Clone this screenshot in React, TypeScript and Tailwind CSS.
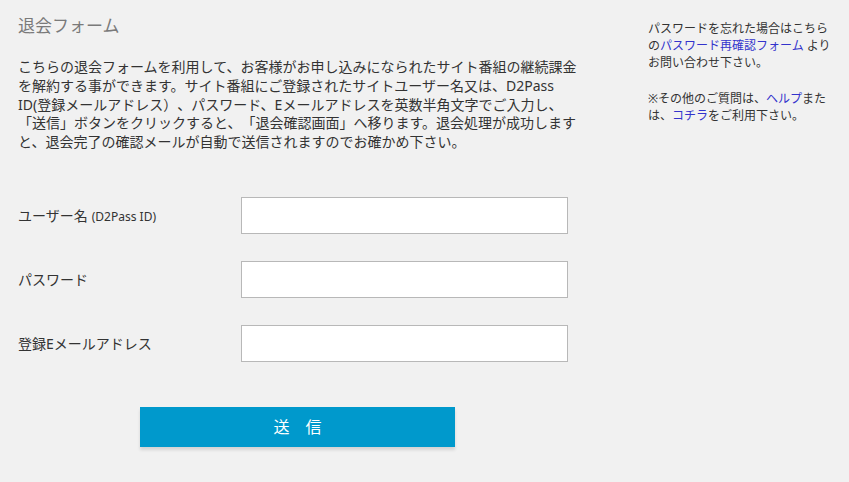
import React from 'react';

const font = "font-['Noto_Sans','Noto_Sans_CJK_JP',sans-serif]";

function FormRow({ label, sub }: { label: string; sub?: string }) {
  return (
    <div className="flex items-center h-[37px]">
      <div className="w-[223px] text-[14px] text-[#333]">
        {label}
        {sub && <span className="text-[12px] ml-1">{sub}</span>}
      </div>
      <input
        type="text"
        className="w-[327px] h-[37px] bg-white border border-[#b8b8b8] outline-none px-2"
      />
    </div>
  );
}

export default function App() {
  return (
    <div className={`w-[849px] h-[482px] bg-[#f1f1f1] flex [text-spacing-trim:space-all] ${font}`}>
      <div className="w-[630px] pl-[18px] pt-[14px]">
        <h1 className="text-[17px] leading-[24px] text-[#7a7a7a] font-normal">退会フォーム</h1>
        <p className="mt-[20px] text-[14px] leading-[18.8px] text-[#333] whitespace-nowrap">
          こちらの退会フォームを利用して、お客様がお申し込みになられたサイト番組の継続課金
          <br />
          を解約する事ができます。サイト番組にご登録されたサイトユーザー名又は、D2Pass
          <br />
          ID(登録メールアドレス）、パスワード、Eメールアドレスを英数半角文字でご入力し、
          <br />
          「送信」ボタンをクリックすると、「退会確認画面」へ移ります。退会処理が成功します
          <br />
          と、退会完了の確認メールが自動で送信されますのでお確かめ下さい。
        </p>

        <div className="mt-[45px] flex flex-col gap-[27px]">
          <FormRow label="ユーザー名" sub="(D2Pass ID)" />
          <FormRow label="パスワード" />
          <FormRow label="登録Eメールアドレス" />
        </div>

        <button className="mt-[45px] ml-[122px] w-[315px] h-[40px] bg-[#0099cc] text-white text-[16px] shadow-[0_3px_3px_rgba(0,0,0,0.12)]">
          送　信
        </button>
      </div>

      <div className="ml-[18px] w-[195px] pt-[20px] text-[12px] leading-[17px] text-[#333]">
        <p>
          パスワードを忘れた場合はこちら
          <br />
          の<a className="text-[#3333cc]">パスワード再確認フォーム</a> より
          <br />
          お問い合わせ下さい。
        </p>
        <p className="mt-[19px]">
          ※その他のご質問は、<a className="text-[#3333cc]">ヘルプ</a>また
          <br />
          は、<a className="text-[#3333cc]">コチラ</a>をご利用下さい。
        </p>
      </div>
    </div>
  );
}
